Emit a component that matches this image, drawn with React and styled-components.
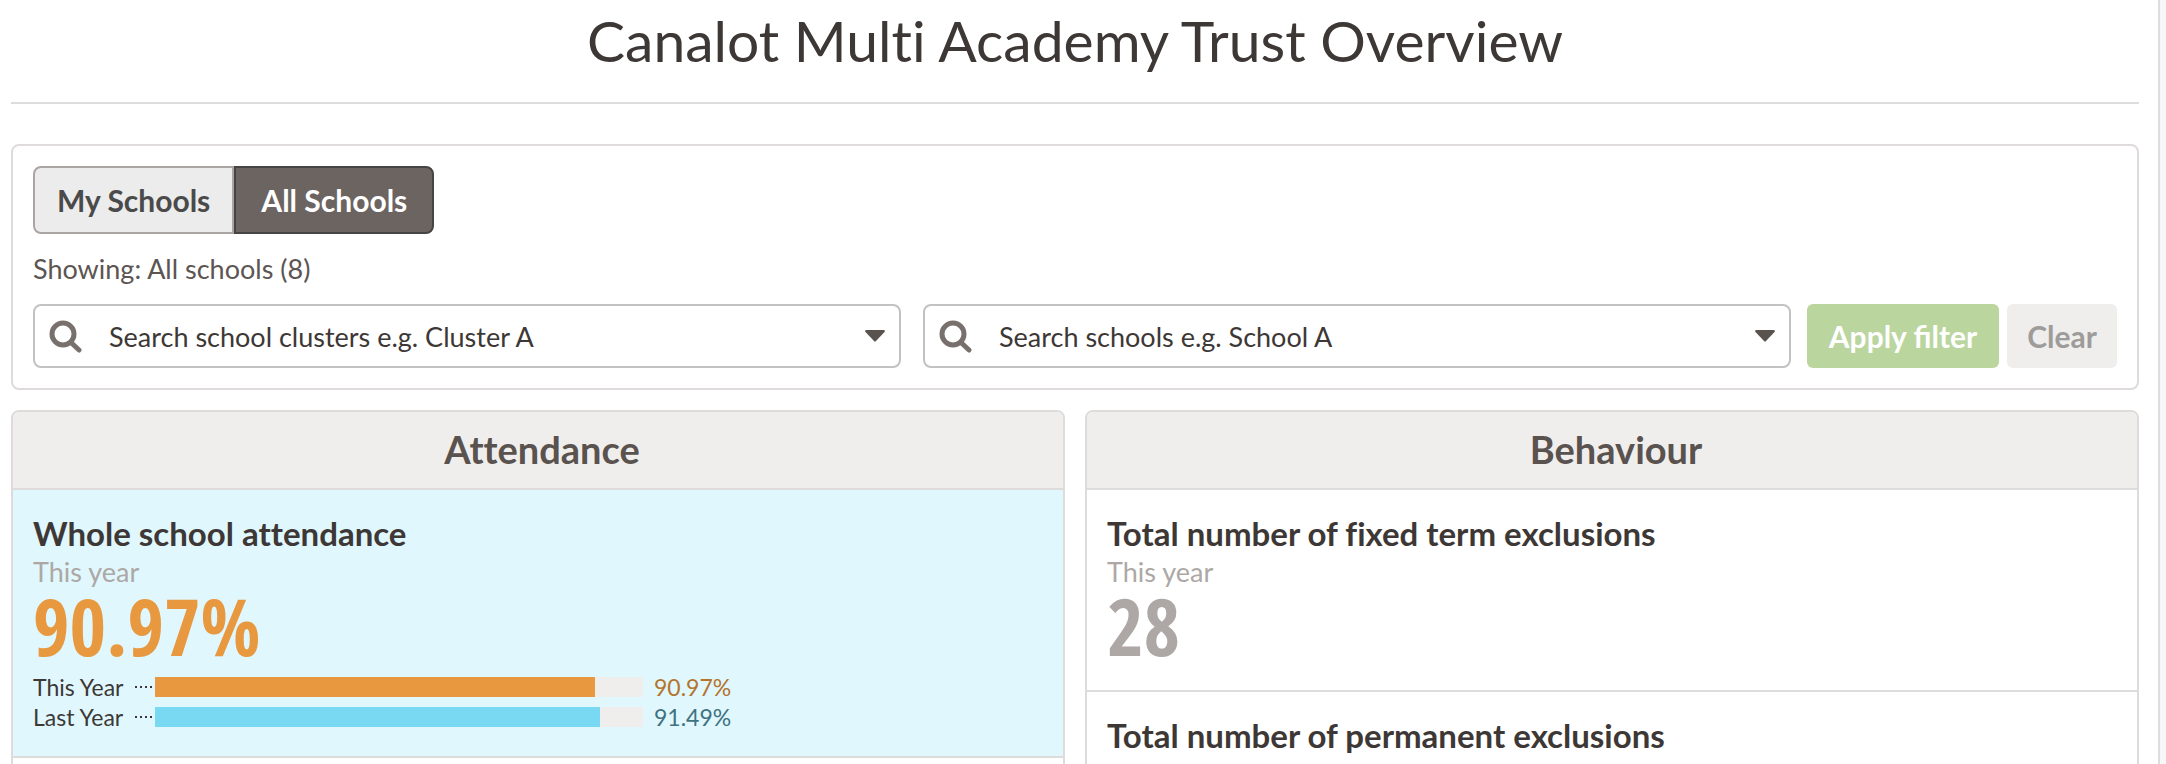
import { useState } from "react"
import styled, { createGlobalStyle } from "styled-components"

const GlobalStyle = createGlobalStyle`
  * {
    box-sizing: border-box;
  }

  body {
    margin: 0;
    background-color: #f7f7f7;
    color: #3d3835;
    font-family: "Lato", sans-serif;
    font-size: 27px;
    font-variant-ligatures: none;
  }

  h1, h2, h3, p {
    margin: 0;
  }

  button, input {
    font-family: inherit;
  }
`

const Page = styled.main`
  height: 100vh;
  overflow: hidden;
  margin-right: 6px;
  padding: 0 19px 0 11px;
  background-color: #fff;
  border-right: solid 2px #dddddd;
`

const Title = styled.h1`
  height: 104px;
  margin-bottom: 40px;
  border-bottom: solid 2px #dddcdc;
  font-size: 57px;
  font-weight: 400;
  line-height: 80px;
  text-align: center;
`

const Filters = styled.section`
  padding: 20px;
  border: solid 2px #dfdbdb;
  border-radius: 8px;
`

const Segmented = styled.div`
  display: flex;
`

const Segment = styled.button`
  height: 68px;
  min-width: 200px;
  padding: 0 22px;
  border: solid 2px ${(props) => (props.$active ? "#464444" : "#aaa5a3")};
  background-color: ${(props) => (props.$active ? "#6b6461" : "#ececec")};
  color: ${(props) => (props.$active ? "#fff" : "#4a4a4a")};
  font-size: 30px;
  font-weight: 700;
  cursor: pointer;

  &:first-child {
    border-radius: 8px 0 0 8px;
  }

  &:last-child {
    border-radius: 0 8px 8px 0;
  }
`

const Showing = styled.p`
  margin: 16px 0;
  color: #5c5552;
  line-height: 38px;
`

const FilterRow = styled.form`
  display: flex;
  gap: 16px;
`

const Searches = styled.div`
  flex: 1;
  display: grid;
  grid-template-columns: 1fr 1fr;
  gap: 22px;
`

const SearchBox = styled.div`
  display: flex;
  align-items: center;
  height: 64px;
  padding: 0 14px;
  border: solid 2px #c3c2c2;
  border-radius: 8px;

  input {
    flex: 1;
    min-width: 0;
    padding: 0;
    margin-left: 26px;
    border: none;
    outline: none;
    background-color: transparent;
    color: #3d3835;
    font-size: 27px;
  }

  input::placeholder {
    color: #3d3835;
    opacity: 1;
  }

  button {
    display: flex;
    padding: 0;
    border: none;
    background-color: transparent;
    cursor: pointer;
  }
`

const Buttons = styled.div`
  display: flex;
  gap: 8px;
`

const Button = styled.button`
  height: 64px;
  min-width: ${(props) => (props.$primary ? "192px" : "110px")};
  padding: 0 20px;
  border: none;
  border-radius: 6px;
  background-color: ${(props) => (props.$primary ? "#bbd59f" : "#efeeed")};
  color: ${(props) => (props.$primary ? "#fff" : "#9e9c9a")};
  font-size: 30px;
  font-weight: 700;
`

const Cards = styled.div`
  display: grid;
  grid-template-columns: 1fr 1fr;
  gap: 20px;
  margin-top: 20px;
`

const Card = styled.section`
  border: solid 2px #dddcdb;
  border-radius: 8px;
  overflow: hidden;
`

const CardTitle = styled.h2`
  height: 76px;
  padding-left: 8px;
  background-color: #efeeec;
  color: #5a524e;
  font-size: 38px;
  font-weight: 700;
  line-height: 74px;
  text-align: center;
`

const Metric = styled.article`
  min-height: 202px;
  padding: 22px 20px 24px;
  border-top: solid 2px #dddcdb;
  background-color: ${(props) => (props.$highlight ? "#e0f7fe" : "#fff")};

  h3 {
    font-size: 33px;
    font-weight: 700;
    line-height: 42px;
  }
`

const Period = styled.p`
  color: #ada8a5;
  line-height: 36px;
`

const Figure = styled.p`
  color: ${(props) => props.$color};
  font-family: "Open Sans Condensed", "Lato", sans-serif;
  font-size: 79px;
  font-weight: 700;
  line-height: 72px;
`

const Bars = styled.div`
  margin-top: 10px;
`

const BarRow = styled.div`
  display: flex;
  align-items: center;
  height: 30px;
  font-size: 23px;
`

const BarLabel = styled.span`
  width: 102px;
`

const Dots = styled.span`
  width: 20px;
  height: 2px;
  background: repeating-linear-gradient(90deg, #3d3835 0 2px, transparent 2px 5px);
`

const Track = styled.span`
  width: 488px;
  height: 20px;
  margin-right: 11px;
  background-color: #efeeed;
`

const Fill = styled.span`
  display: block;
  height: 100%;
  background-color: ${(props) => props.$color};
`

const BarValue = styled.span`
  color: ${(props) => props.$color};
`

const years = [
  { label: "This Year", value: "90.97%", fill: 90.2, bar: "#e8983e", text: "#b4742c" },
  { label: "Last Year", value: "91.49%", fill: 91.2, bar: "#79d8f2", text: "#3f727f" },
]

function SearchIcon() {
  return (
    <svg width="34" height="34" viewBox="0 0 34 34" fill="none" stroke="#78706c" aria-hidden="true">
      <circle cx="14" cy="15" r="11" strokeWidth="5" />
      <path d="M22 23.5 L30 31" strokeWidth="5" strokeLinecap="round" />
    </svg>
  )
}

function Search({ label, placeholder }) {
  return (
    <SearchBox>
      <SearchIcon />
      <input type="text" aria-label={label} placeholder={placeholder} />
      <button type="button" aria-label={`Open ${label}`}>
        <svg width="20" height="12" viewBox="0 0 20 12" fill="#5a524e">
          <path d="M1 0 H19 Q20.5 0.5 19.5 2 L11 11 Q10 12 9 11 L0.5 2 Q-0.5 0.5 1 0 Z" />
        </svg>
      </button>
    </SearchBox>
  )
}

export default function App() {
  const [scope, setScope] = useState("all")

  return (
    <>
      <GlobalStyle />
      <Page>
        <Title>Canalot Multi Academy Trust Overview</Title>
        <Filters>
          <Segmented>
            <Segment type="button" $active={scope === "my"} onClick={() => setScope("my")}>
              My Schools
            </Segment>
            <Segment type="button" $active={scope === "all"} onClick={() => setScope("all")}>
              All Schools
            </Segment>
          </Segmented>
          <Showing>Showing: All schools (8)</Showing>
          <FilterRow onSubmit={(e) => e.preventDefault()}>
            <Searches>
              <Search label="school clusters" placeholder="Search school clusters e.g. Cluster A" />
              <Search label="schools" placeholder="Search schools e.g. School A" />
            </Searches>
            <Buttons>
              <Button type="submit" $primary>Apply filter</Button>
              <Button type="reset">Clear</Button>
            </Buttons>
          </FilterRow>
        </Filters>
        <Cards>
          <Card>
            <CardTitle>Attendance</CardTitle>
            <Metric $highlight>
              <h3>Whole school attendance</h3>
              <Period>This year</Period>
              <Figure $color="#e8983e">90.97%</Figure>
              <Bars>
                {years.map((year) => (
                  <BarRow key={year.label}>
                    <BarLabel>{year.label}</BarLabel>
                    <Dots />
                    <Track>
                      <Fill $color={year.bar} style={{ width: `${year.fill}%` }} />
                    </Track>
                    <BarValue $color={year.text}>{year.value}</BarValue>
                  </BarRow>
                ))}
              </Bars>
            </Metric>
            <Metric />
          </Card>
          <Card>
            <CardTitle>Behaviour</CardTitle>
            <Metric>
              <h3>Total number of fixed term exclusions</h3>
              <Period>This year</Period>
              <Figure $color="#ada8a5">28</Figure>
            </Metric>
            <Metric>
              <h3>Total number of permanent exclusions</h3>
            </Metric>
          </Card>
        </Cards>
      </Page>
    </>
  )
}
